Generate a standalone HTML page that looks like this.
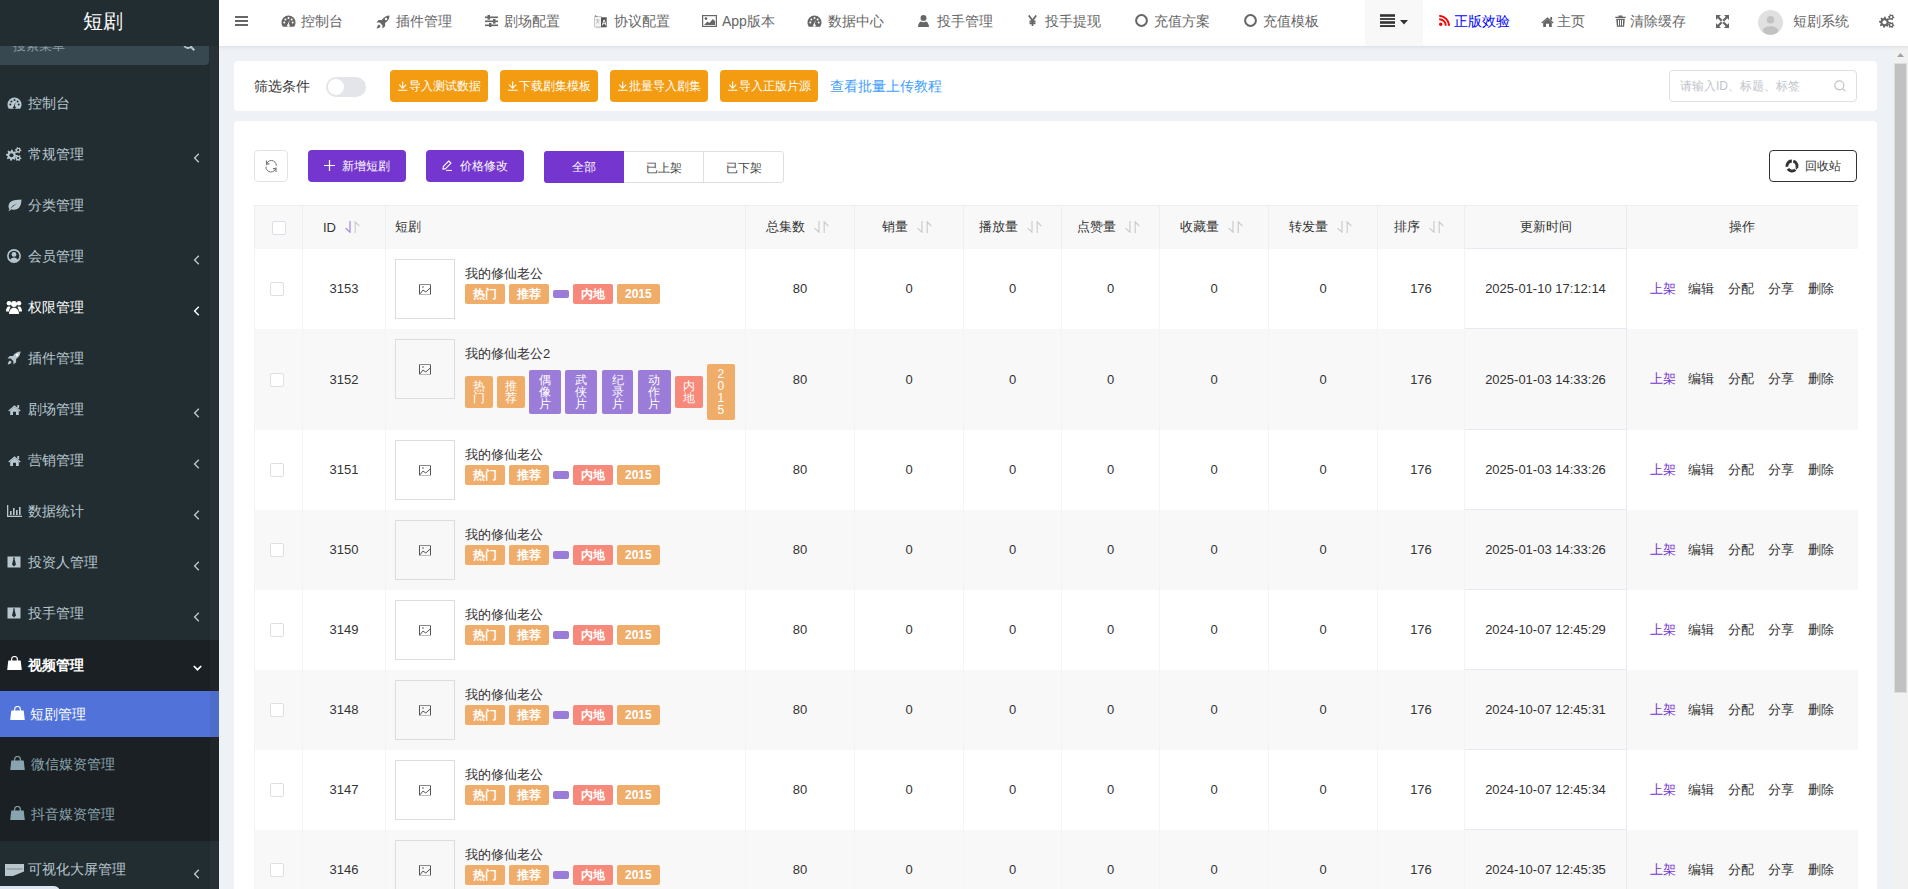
<!DOCTYPE html>
<html><head><meta charset="utf-8">
<style>
*{box-sizing:border-box;margin:0;padding:0}
html,body{width:1908px;height:889px;overflow:hidden;background:#eef2f6;font-family:"Liberation Sans",sans-serif;color:#333}
.sidebar{position:absolute;left:0;top:0;width:219px;height:889px;background:#222d32;overflow:hidden}
.logo{position:absolute;left:0;top:0;width:219px;height:46px;background:#222d32;color:#fff;font-size:20px;line-height:42px;text-align:center;z-index:3;font-weight:300;padding-right:13px}
.ssearch{position:absolute;left:0;top:27px;width:209px;height:38px;background:#374850;border-radius:0 0 4px 0;color:#8a9aa2;font-size:14px}
.ssearch .ph{position:absolute;left:13px;top:11px;font-size:13px;line-height:16px}
.sitem{position:absolute;left:0;width:219px;height:51px;font-size:14px}
.sic{position:absolute;left:6px;top:18px;width:16px;height:14px;display:flex;align-items:center;justify-content:center}
.stx{position:absolute;left:28px;top:15px;line-height:20px}
.sarr{position:absolute;left:193px;top:24px;line-height:0}
.strack{position:absolute;left:210px;top:46px;width:9px;height:843px;background:rgba(255,255,255,0.025)}
.header{position:absolute;left:219px;top:0;width:1689px;height:46px;background:#fff;box-shadow:0 1px 4px rgba(0,0,0,0.09);z-index:2;color:#666}
.nicon{position:absolute;top:15px;line-height:0;color:#666}
.ntext{position:absolute;top:11px;font-size:14px;line-height:20px;color:#666;white-space:nowrap}
.hx{position:absolute}
.vscroll{position:absolute;left:1892px;top:46px;width:16px;height:843px;background:#f1f1f1}
.vscroll .thumb{position:absolute;left:2px;top:17px;width:13px;height:630px;background:#c1c1c1}
.panel{position:absolute;left:234px;width:1643px;background:#fff;border-radius:4px}
.fbtn{position:absolute;top:70px;height:32px;width:98px;background:#f39c12;color:#fff;font-size:12px;border-radius:4px;line-height:32px;text-align:center;white-space:nowrap}
.tbtn{position:absolute;top:150px;height:32px;border-radius:4px;font-size:12px;line-height:32px;white-space:nowrap}
.purple{background:#7536d0;color:#fff}
table{position:absolute;left:254px;top:205px;width:1603px;border-collapse:collapse;table-layout:fixed;font-size:13px;color:#333}
th{height:43px;background:#f8f8f9;font-weight:normal;color:#333;border:1px solid #eceef3;border-width:1px 1px 0 1px;white-space:nowrap}
th:first-child{}
td{border:1px solid #f4f4f4;border-width:0 1px;text-align:center;vertical-align:middle;padding:0}
tr.even td{background:#f8f8f8}
tr.odd td{background:#fff}
.cb{display:inline-block;width:14px;height:14px;border:1px solid #dcdfe6;border-radius:2px;background:#fff;vertical-align:middle}
.sorti{vertical-align:middle;margin-left:9px;position:relative;top:-1px}
td.drama{text-align:left;vertical-align:top}
.dwrap{display:flex;padding:10px 0 0 9px}
.thumb{width:60px;height:60px;border:1px solid #ddd;display:flex;align-items:center;justify-content:center;flex:none}
.dinfo{margin-left:10px}
.dtitle{font-size:13px;line-height:18px;margin-top:6px;color:#333}
.tags{display:flex;align-items:center;margin-top:1px}
.lb{display:inline-block;font-size:12px;line-height:12px;font-weight:600;padding:4px 8px;color:#fff;border-radius:2px;margin-right:4px;text-align:center;word-break:break-all}
.lb.o{background:#f0ad6a}
.lb.r{background:#f7897a}
.lb.p{background:#9b7cd8}
.lb.e{padding:4px 8px;height:8px}
.tags.big{margin-top:1px}
.tags.big .lb{padding:4px 8px;font-weight:normal}
.tags.big .lb.p{margin-right:4.7px}
.ops a{color:#333}
td.dt{border-color:#ebe8f3;border-bottom:1px solid #ebe8f3}
th.dt{border-bottom:1px solid #ebe8f3;border-left-color:#ebe8f3;border-right-color:#ebe8f3}
td:last-child,th:last-child{border-right-color:transparent}
.ops a.on{color:#7536d0}
</style></head><body>
<div class="sidebar">
  <div class="logo">短剧</div>
  <div class="ssearch"><span class="ph">搜索菜单</span><span style="position:absolute;left:183px;top:12px;line-height:0"><svg width="12" height="12" viewBox="0 0 12 12" style=""><circle cx="5" cy="5" r="4" stroke="#b8c7ce" stroke-width="1.8" fill="none"/><path d="M8 8l3.3 3.3" stroke="#b8c7ce" stroke-width="2"/></svg></span></div>
<div class="sitem" style="top:78px;color:#b8c7ce"><span class="sic"><svg width="15" height="12" viewBox="0 0 15 12" style=""><path d="M7.5 0.5A7 7 0 0 0 0.5 7.5c0 1.6.5 3 1.4 4.2h11.2c.9-1.2 1.4-2.6 1.4-4.2A7 7 0 0 0 7.5.5z" fill="currentColor"/><circle cx="3.3" cy="7.6" r="1" fill="#222d32"/><circle cx="4.4" cy="4.4" r="1" fill="#222d32"/><circle cx="7.5" cy="3" r="1" fill="#222d32"/><circle cx="10.6" cy="4.4" r="1" fill="#222d32"/><circle cx="11.7" cy="7.6" r="1" fill="#222d32"/><path d="M8.6 4.5L7.9 9.3a1.3 1.3 0 1 1-1 0z" fill="#222d32"/></svg></span><span class="stx" style="">控制台</span></div>
<div class="sitem" style="top:129px;color:#b8c7ce"><span class="sic"><svg width="16" height="14" viewBox="0 0 16 14" style=""><polygon points="11.10,8.20 10.99,9.29 9.23,9.74 8.85,10.44 9.46,12.16 8.61,12.86 7.04,11.93 6.29,12.15 5.50,13.80 4.41,13.69 3.96,11.93 3.26,11.55 1.54,12.16 0.84,11.31 1.77,9.74 1.55,8.99 -0.10,8.20 0.01,7.11 1.77,6.66 2.15,5.96 1.54,4.24 2.39,3.54 3.96,4.47 4.71,4.25 5.50,2.60 6.59,2.71 7.04,4.47 7.74,4.85 9.46,4.24 10.16,5.09 9.23,6.66 9.45,7.41" fill="currentColor"/><circle cx="5.5" cy="8.2" r="2" fill="#222d32"/><polygon points="15.40,3.20 15.29,4.03 14.20,4.35 13.83,4.83 13.80,5.97 13.03,6.29 12.20,5.50 11.60,5.43 10.60,5.97 9.94,5.46 10.20,4.35 9.97,3.80 9.00,3.20 9.11,2.37 10.20,2.05 10.57,1.57 10.60,0.43 11.37,0.11 12.20,0.90 12.80,0.97 13.80,0.43 14.46,0.94 14.20,2.05 14.43,2.60" fill="currentColor"/><circle cx="12.2" cy="3.2" r="1.1" fill="#222d32"/><polygon points="15.40,11.00 15.29,11.83 14.20,12.15 13.83,12.63 13.80,13.77 13.03,14.09 12.20,13.30 11.60,13.23 10.60,13.77 9.94,13.26 10.20,12.15 9.97,11.60 9.00,11.00 9.11,10.17 10.20,9.85 10.57,9.37 10.60,8.23 11.37,7.91 12.20,8.70 12.80,8.77 13.80,8.23 14.46,8.74 14.20,9.85 14.43,10.40" fill="currentColor"/><circle cx="12.2" cy="11" r="1.1" fill="#222d32"/></svg></span><span class="stx" style="">常规管理</span><span class="sarr"><svg width="7" height="10" viewBox="0 0 7 10" style=""><path d="M5.8 0.8L1.6 5 5.8 9.2" stroke="currentColor" stroke-width="1.4" fill="none"/></svg></span></div>
<div class="sitem" style="top:180px;color:#b8c7ce"><span class="sic"><svg width="15" height="12" viewBox="0 0 15 12" style=""><path d="M14.5 0.5C10 1 4 0.5 2 5c-1 2.3-.3 4.3.6 5.4C5 6.5 8 5 10 4.4 7.5 6 4.5 8.2 1.5 11.5l.8.6c.8-.8 1.5-1.5 2-1.9 2.4 1.2 6.5.9 8.6-2.6 1.6-2.7 1.3-5.5 1.6-7.1z" fill="currentColor"/></svg></span><span class="stx" style="">分类管理</span></div>
<div class="sitem" style="top:231px;color:#b8c7ce"><span class="sic"><svg width="14" height="14" viewBox="0 0 14 14" style=""><circle cx="7" cy="7" r="6.1" fill="none" stroke="currentColor" stroke-width="1.6"/><circle cx="7" cy="5.4" r="2.4" fill="currentColor"/><path d="M3 11c.8-1.7 2.2-2.6 4-2.6s3.2.9 4 2.6A5.6 5.6 0 0 1 7 12.6 5.6 5.6 0 0 1 3 11z" fill="currentColor"/></svg></span><span class="stx" style="">会员管理</span><span class="sarr"><svg width="7" height="10" viewBox="0 0 7 10" style=""><path d="M5.8 0.8L1.6 5 5.8 9.2" stroke="currentColor" stroke-width="1.4" fill="none"/></svg></span></div>
<div class="sitem" style="top:282px;color:#fff"><span class="sic"><svg width="16" height="14" viewBox="0 0 16 14" style=""><circle cx="8" cy="4" r="3" fill="currentColor"/><path d="M3 14c0-3.8 2-6.3 5-6.3s5 2.5 5 6.3z" fill="currentColor"/><circle cx="3" cy="3.2" r="2.3" fill="currentColor"/><path d="M0 11.5c0-3 1.1-5 3-5 .6 0 1.2.1 1.7.4C3.7 8.2 3 10 3 11.5z" fill="currentColor"/><circle cx="13" cy="3.2" r="2.3" fill="currentColor"/><path d="M16 11.5c0-3-1.1-5-3-5-.6 0-1.2.1-1.7.4 1 1.3 1.7 3.1 1.7 4.6z" fill="currentColor"/></svg></span><span class="stx" style="">权限管理</span><span class="sarr"><svg width="7" height="10" viewBox="0 0 7 10" style=""><path d="M5.8 0.8L1.6 5 5.8 9.2" stroke="currentColor" stroke-width="1.4" fill="none"/></svg></span></div>
<div class="sitem" style="top:333px;color:#b8c7ce"><span class="sic"><svg width="14" height="14" viewBox="0 0 14 14" style=""><path d="M13.5 0.5c-3 0-5.6 1.6-7.6 4.4H2.7L0.5 7.6h3.2l2.7 2.7v3.2l2.7-2.2V8.1c2.8-2 4.4-4.6 4.4-7.6z" fill="currentColor"/><path d="M3 9.5c-1.2.6-2 2.2-2.3 4 1.8-.3 3.4-1.1 4-2.3z" fill="currentColor"/><circle cx="10" cy="4" r="1.2" fill="#fff"/></svg></span><span class="stx" style="">插件管理</span></div>
<div class="sitem" style="top:384px;color:#b8c7ce"><span class="sic"><svg width="13" height="11" viewBox="0 0 13 11" style=""><path d="M6.5 1.2L0.3 6.4l.9 1 5.3-4.4 5.3 4.4.9-1z" fill="currentColor"/><path d="M2.2 6.5L6.5 3l4.3 3.5V11H8V7.8H5V11H2.2z" fill="currentColor"/><rect x="9.3" y="1" width="1.8" height="3" fill="currentColor"/></svg></span><span class="stx" style="">剧场管理</span><span class="sarr"><svg width="7" height="10" viewBox="0 0 7 10" style=""><path d="M5.8 0.8L1.6 5 5.8 9.2" stroke="currentColor" stroke-width="1.4" fill="none"/></svg></span></div>
<div class="sitem" style="top:435px;color:#b8c7ce"><span class="sic"><svg width="13" height="11" viewBox="0 0 13 11" style=""><path d="M6.5 1.2L0.3 6.4l.9 1 5.3-4.4 5.3 4.4.9-1z" fill="currentColor"/><path d="M2.2 6.5L6.5 3l4.3 3.5V11H8V7.8H5V11H2.2z" fill="currentColor"/><rect x="9.3" y="1" width="1.8" height="3" fill="currentColor"/></svg></span><span class="stx" style="">营销管理</span><span class="sarr"><svg width="7" height="10" viewBox="0 0 7 10" style=""><path d="M5.8 0.8L1.6 5 5.8 9.2" stroke="currentColor" stroke-width="1.4" fill="none"/></svg></span></div>
<div class="sitem" style="top:486px;color:#b8c7ce"><span class="sic"><svg width="15" height="12" viewBox="0 0 15 12" style=""><rect x="0" y="0" width="1.3" height="12" fill="currentColor"/><rect x="0" y="10.7" width="15" height="1.3" fill="currentColor"/><rect x="3" y="6" width="1.6" height="4" fill="currentColor"/><rect x="6" y="3" width="1.6" height="7" fill="currentColor"/><rect x="9" y="5" width="1.6" height="5" fill="currentColor"/><rect x="12" y="2" width="1.6" height="8" fill="currentColor"/></svg></span><span class="stx" style="">数据统计</span><span class="sarr"><svg width="7" height="10" viewBox="0 0 7 10" style=""><path d="M5.8 0.8L1.6 5 5.8 9.2" stroke="currentColor" stroke-width="1.4" fill="none"/></svg></span></div>
<div class="sitem" style="top:537px;color:#b8c7ce"><span class="sic"><svg width="14" height="12" viewBox="0 0 14 12" style=""><rect x="0.5" y="0.5" width="13" height="11" fill="currentColor"/><path d="M6 1.5h2l-.4 1.6L9 8.5 7 10.5 5 8.5l1.4-5.4z" fill="#222d32"/></svg></span><span class="stx" style="">投资人管理</span><span class="sarr"><svg width="7" height="10" viewBox="0 0 7 10" style=""><path d="M5.8 0.8L1.6 5 5.8 9.2" stroke="currentColor" stroke-width="1.4" fill="none"/></svg></span></div>
<div class="sitem" style="top:588px;color:#b8c7ce"><span class="sic"><svg width="14" height="12" viewBox="0 0 14 12" style=""><rect x="0.5" y="0.5" width="13" height="11" fill="currentColor"/><path d="M6 1.5h2l-.4 1.6L9 8.5 7 10.5 5 8.5l1.4-5.4z" fill="#222d32"/></svg></span><span class="stx" style="">投手管理</span><span class="sarr"><svg width="7" height="10" viewBox="0 0 7 10" style=""><path d="M5.8 0.8L1.6 5 5.8 9.2" stroke="currentColor" stroke-width="1.4" fill="none"/></svg></span></div>
  <div style="position:absolute;left:0;top:640px;width:219px;height:201px;background:#1a2023"></div>
  <div class="sitem" style="top:640px;color:#fff"><span class="sic" style="top:16px"><svg width="15" height="14" viewBox="0 0 15 14" style=""><path d="M4.6 5V3.4a2.9 2.9 0 0 1 5.8 0V5" stroke="currentColor" stroke-width="1.2" fill="none"/><path d="M1.3 4.6h12.4l1.1 9.4H0.2z" fill="currentColor"/></svg></span><span class="stx" style="font-weight:600">视频管理</span><span class="sarr" style="left:193px;top:24.5px"><svg width="9" height="6" viewBox="0 0 9 6" style=""><path d="M0.8 1L4.5 4.7 8.2 1" stroke="currentColor" stroke-width="1.7" fill="none"/></svg></span></div>
  <div style="position:absolute;left:0;top:691px;width:219px;height:46px;background:#5072d9"></div><div style="position:absolute;left:210px;top:691px;width:9px;height:46px;background:rgba(0,0,0,0.07)"></div>
  <div class="sitem" style="top:691px;height:46px;color:#fff"><span class="sic" style="left:9px;top:15px"><svg width="15" height="14" viewBox="0 0 15 14" style=""><path d="M4.6 5V3.4a2.9 2.9 0 0 1 5.8 0V5" stroke="currentColor" stroke-width="1.2" fill="none"/><path d="M1.3 4.6h12.4l1.1 9.4H0.2z" fill="currentColor"/></svg></span><span class="stx" style="left:30px;top:13px">短剧管理</span></div>
  <div class="sitem" style="top:739px;height:50px;color:#8aa4af"><span class="sic" style="left:9px;top:17px"><svg width="15" height="14" viewBox="0 0 15 14" style=""><path d="M4.6 5V3.4a2.9 2.9 0 0 1 5.8 0V5" stroke="currentColor" stroke-width="1.2" fill="none"/><path d="M1.3 4.6h12.4l1.1 9.4H0.2z" fill="currentColor"/></svg></span><span class="stx" style="left:31px;top:15px">微信媒资管理</span></div>
  <div class="sitem" style="top:789px;height:50px;color:#8aa4af"><span class="sic" style="left:9px;top:17px"><svg width="15" height="14" viewBox="0 0 15 14" style=""><path d="M4.6 5V3.4a2.9 2.9 0 0 1 5.8 0V5" stroke="currentColor" stroke-width="1.2" fill="none"/><path d="M1.3 4.6h12.4l1.1 9.4H0.2z" fill="currentColor"/></svg></span><span class="stx" style="left:31px;top:15px">抖音媒资管理</span></div>
  <div class="sitem" style="top:843px;color:#b8c7ce"><span class="sic" style="left:4px;width:20px;top:20px"><svg width="19" height="12" viewBox="0 0 19 12" style=""><rect x="0" y="0" width="19" height="12" fill="currentColor"/><rect x="1.5" y="4.5" width="16" height="1" fill="#888"/><path d="M8 12L19 7.5V12z" fill="#222d32"/></svg></span><span class="stx" style="top:16px">可视化大屏管理</span><span class="sarr" style="top:26px"><svg width="7" height="10" viewBox="0 0 7 10" style=""><path d="M5.8 0.8L1.6 5 5.8 9.2" stroke="currentColor" stroke-width="1.4" fill="none"/></svg></span></div>
  <div class="strack"></div>
  <div style="position:absolute;left:0;top:886px;width:60px;height:10px;background:#dde6f0;border-radius:0 6px 0 0"></div>
</div>
<div class="header">
  <span class="nicon" style="left:16px;top:16px"><svg width="13" height="10" viewBox="0 0 13 10" style=""><rect x="0" y="0" width="13" height="2" fill="currentColor"/><rect x="0" y="4" width="13" height="2" fill="currentColor"/><rect x="0" y="8" width="13" height="2" fill="currentColor"/></svg></span>
<span class="nicon" style="left:62px;"><svg width="15" height="12" viewBox="0 0 15 12" style=""><path d="M7.5 0.5A7 7 0 0 0 0.5 7.5c0 1.6.5 3 1.4 4.2h11.2c.9-1.2 1.4-2.6 1.4-4.2A7 7 0 0 0 7.5.5z" fill="currentColor"/><circle cx="3.3" cy="7.6" r="1" fill="#fff"/><circle cx="4.4" cy="4.4" r="1" fill="#fff"/><circle cx="7.5" cy="3" r="1" fill="#fff"/><circle cx="10.6" cy="4.4" r="1" fill="#fff"/><circle cx="11.7" cy="7.6" r="1" fill="#fff"/><path d="M8.6 4.5L7.9 9.3a1.3 1.3 0 1 1-1 0z" fill="#fff"/></svg></span>
<span class="ntext" style="left:82px">控制台</span>
<span class="nicon" style="left:157px;"><svg width="14" height="14" viewBox="0 0 14 14" style=""><path d="M13.5 0.5c-3 0-5.6 1.6-7.6 4.4H2.7L0.5 7.6h3.2l2.7 2.7v3.2l2.7-2.2V8.1c2.8-2 4.4-4.6 4.4-7.6z" fill="currentColor"/><path d="M3 9.5c-1.2.6-2 2.2-2.3 4 1.8-.3 3.4-1.1 4-2.3z" fill="currentColor"/><circle cx="10" cy="4" r="1.2" fill="#fff"/></svg></span>
<span class="ntext" style="left:177px">插件管理</span>
<span class="nicon" style="left:266px;"><svg width="13" height="12" viewBox="0 0 13 12" style=""><rect x="0" y="1.5" width="13" height="1.6" fill="currentColor"/><rect x="0" y="5.5" width="13" height="1.6" fill="currentColor"/><rect x="0" y="9.5" width="13" height="1.6" fill="currentColor"/><rect x="2.5" y="0" width="2.5" height="4.6" fill="currentColor"/><rect x="8" y="4" width="2.5" height="4.6" fill="currentColor"/><rect x="4" y="8" width="2.5" height="4.6" fill="currentColor"/></svg></span>
<span class="ntext" style="left:285px">剧场配置</span>
<span class="nicon" style="left:375px;"><svg width="13" height="14" viewBox="0 0 13 14" style=""><path d="M0.5 1.5h7v10.5h-7z" fill="#f4f4f4" stroke="#bbb" stroke-width="0.8"/><path d="M1 0.3L4 1.5H1z" fill="#555"/><path d="M2 5h3.5M3.7 4v1M2.4 8.5l2.6-3.2M2.6 5.5l2.4 3" stroke="#aaa" stroke-width="0.7" fill="none"/><path d="M7 2.3h5.7v10H7z" fill="#555"/><path d="M8.3 10.5l1.6-5.5h.5l1.6 5.5M8.9 8.7h2.5" stroke="#fff" stroke-width="0.9" fill="none"/><path d="M2 12.6h4.5" stroke="#bbb" stroke-width="0.8"/></svg></span>
<span class="ntext" style="left:395px">协议配置</span>
<span class="nicon" style="left:483px;"><svg width="15" height="12" viewBox="0 0 15 12" style=""><rect x="0.6" y="0.6" width="13.8" height="10.8" fill="none" stroke="currentColor" stroke-width="1.2"/><circle cx="4" cy="3.6" r="1.4" fill="currentColor"/><path d="M2 10l3.5-3.5 1.8 1.6 3.6-4.2 2.2 2.4V10z" fill="currentColor"/></svg></span>
<span class="ntext" style="left:503px">App版本</span>
<span class="nicon" style="left:588px;"><svg width="15" height="12" viewBox="0 0 15 12" style=""><path d="M7.5 0.5A7 7 0 0 0 0.5 7.5c0 1.6.5 3 1.4 4.2h11.2c.9-1.2 1.4-2.6 1.4-4.2A7 7 0 0 0 7.5.5z" fill="currentColor"/><circle cx="3.3" cy="7.6" r="1" fill="#fff"/><circle cx="4.4" cy="4.4" r="1" fill="#fff"/><circle cx="7.5" cy="3" r="1" fill="#fff"/><circle cx="10.6" cy="4.4" r="1" fill="#fff"/><circle cx="11.7" cy="7.6" r="1" fill="#fff"/><path d="M8.6 4.5L7.9 9.3a1.3 1.3 0 1 1-1 0z" fill="#fff"/></svg></span>
<span class="ntext" style="left:609px">数据中心</span>
<span class="nicon" style="left:699px;"><svg width="11" height="12" viewBox="0 0 11 12" style=""><circle cx="5.5" cy="3" r="3" fill="currentColor"/><path d="M0 12c0-3.2 1.6-5.2 3-5.6.7.5 1.6.8 2.5.8s1.8-.3 2.5-.8c1.4.4 3 2.4 3 5.6z" fill="currentColor"/></svg></span>
<span class="ntext" style="left:718px">投手管理</span>
<span class="nicon" style="left:809px;top:15px"><svg width="9" height="11" viewBox="0 0 9 11" style=""><path d="M0.8 0.4L4.5 5.6 8.2 0.4M4.5 5.4V11M1.5 6.3h6M1.5 8.4h6" stroke="#666" stroke-width="1.7" fill="none"/></svg></span>
<span class="ntext" style="left:826px">投手提现</span>
<span class="nicon" style="left:916px;top:14px"><svg width="13" height="13" viewBox="0 0 13 13" style=""><circle cx="6.5" cy="6.5" r="5.4" fill="none" stroke="currentColor" stroke-width="2"/></svg></span>
<span class="ntext" style="left:935px">充值方案</span>
<span class="nicon" style="left:1025px;top:14px"><svg width="13" height="13" viewBox="0 0 13 13" style=""><circle cx="6.5" cy="6.5" r="5.4" fill="none" stroke="currentColor" stroke-width="2"/></svg></span>
<span class="ntext" style="left:1044px">充值模板</span>
  <div style="position:absolute;left:1146px;top:0;width:58px;height:46px;background:#f8f8f8"></div>
  <span class="nicon" style="left:1161px;top:14px;color:#333"><svg width="15" height="13" viewBox="0 0 15 13" style=""><rect x="0" y="0.2" width="15" height="2.6" fill="currentColor"/><rect x="0" y="4.1" width="15" height="1.8" fill="currentColor"/><rect x="0" y="7.2" width="15" height="2.6" fill="currentColor"/><rect x="0" y="11.1" width="15" height="1.9" fill="currentColor"/></svg></span>
  <span class="nicon" style="left:1181px;top:20px;color:#333"><svg width="8" height="5" viewBox="0 0 8 5" style=""><path d="M0 0h8L4 4.6z" fill="currentColor"/></svg></span>
  <span class="nicon" style="left:1220px;top:15px;color:#f00"><svg width="11" height="11" viewBox="0 0 11 11" style=""><circle cx="1.7" cy="9.3" r="1.7" fill="currentColor"/><path d="M0.2 4.2a6.6 6.6 0 0 1 6.6 6.6" stroke="currentColor" stroke-width="1.9" fill="none"/><path d="M0.2 0.9a9.9 9.9 0 0 1 9.9 9.9" stroke="currentColor" stroke-width="1.9" fill="none"/></svg></span>
  <span class="ntext" style="left:1235px;color:#00f">正版效验</span>
  <span class="nicon" style="left:1322px;top:16px"><svg width="13" height="11" viewBox="0 0 13 11" style=""><path d="M6.5 1.2L0.3 6.4l.9 1 5.3-4.4 5.3 4.4.9-1z" fill="currentColor"/><path d="M2.2 6.5L6.5 3l4.3 3.5V11H8V7.8H5V11H2.2z" fill="currentColor"/><rect x="9.3" y="1" width="1.8" height="3" fill="currentColor"/></svg></span>
  <span class="ntext" style="left:1338px">主页</span>
  <span class="nicon" style="left:1396px;top:15px"><svg width="11" height="12" viewBox="0 0 11 12" style=""><path d="M3.5 0.5h4v1.2h3.2v1.4H0.3V1.7h3.2z" fill="currentColor"/><path d="M1.2 3.8h8.6l-.7 8H1.9z" fill="currentColor"/><rect x="3" y="5" width="1" height="5.5" fill="#fff"/><rect x="5" y="5" width="1" height="5.5" fill="#fff"/><rect x="7" y="5" width="1" height="5.5" fill="#fff"/></svg></span>
  <span class="ntext" style="left:1411px">清除缓存</span>
  <span class="nicon" style="left:1497px;top:15px"><svg width="13" height="13" viewBox="0 0 13 13" style=""><path d="M0 0h5L3.3 1.7 6.5 4.9 4.9 6.5 1.7 3.3 0 5z M13 0v5l-1.7-1.7-3.2 3.2-1.6-1.6 3.2-3.2L8 0z M0 13V8l1.7 1.7 3.2-3.2 1.6 1.6-3.2 3.2L5 13z M13 13H8l1.7-1.7-3.2-3.2 1.6-1.6 3.2 3.2L13 8z" fill="currentColor"/></svg></span>
  <span class="nicon" style="left:1539px;top:10px"><svg width="25" height="25" viewBox="0 0 25 25" style=""><circle cx="12.5" cy="12.5" r="12.5" fill="#e0e0e0"/><circle cx="12.5" cy="9.8" r="3.8" fill="#c2c2c2"/><ellipse cx="12.5" cy="20.5" rx="7.8" ry="4.3" fill="#c2c2c2"/></svg></span>
  <span class="ntext" style="left:1574px">短剧系统</span>
  <span class="nicon" style="left:1660px;top:14px"><svg width="16" height="14" viewBox="0 0 16 14" style=""><polygon points="11.10,8.20 10.99,9.29 9.23,9.74 8.85,10.44 9.46,12.16 8.61,12.86 7.04,11.93 6.29,12.15 5.50,13.80 4.41,13.69 3.96,11.93 3.26,11.55 1.54,12.16 0.84,11.31 1.77,9.74 1.55,8.99 -0.10,8.20 0.01,7.11 1.77,6.66 2.15,5.96 1.54,4.24 2.39,3.54 3.96,4.47 4.71,4.25 5.50,2.60 6.59,2.71 7.04,4.47 7.74,4.85 9.46,4.24 10.16,5.09 9.23,6.66 9.45,7.41" fill="currentColor"/><circle cx="5.5" cy="8.2" r="2" fill="#fff"/><polygon points="15.40,3.20 15.29,4.03 14.20,4.35 13.83,4.83 13.80,5.97 13.03,6.29 12.20,5.50 11.60,5.43 10.60,5.97 9.94,5.46 10.20,4.35 9.97,3.80 9.00,3.20 9.11,2.37 10.20,2.05 10.57,1.57 10.60,0.43 11.37,0.11 12.20,0.90 12.80,0.97 13.80,0.43 14.46,0.94 14.20,2.05 14.43,2.60" fill="currentColor"/><circle cx="12.2" cy="3.2" r="1.1" fill="#fff"/><polygon points="15.40,11.00 15.29,11.83 14.20,12.15 13.83,12.63 13.80,13.77 13.03,14.09 12.20,13.30 11.60,13.23 10.60,13.77 9.94,13.26 10.20,12.15 9.97,11.60 9.00,11.00 9.11,10.17 10.20,9.85 10.57,9.37 10.60,8.23 11.37,7.91 12.20,8.70 12.80,8.77 13.80,8.23 14.46,8.74 14.20,9.85 14.43,10.40" fill="currentColor"/><circle cx="12.2" cy="11" r="1.1" fill="#fff"/></svg></span>
</div>
<div class="vscroll"><svg style="position:absolute;left:5px;top:7px" width="7" height="4" viewBox="0 0 7 4"><path d="M3.5 0L7 4H0z" fill="#a3a3a3"/></svg><div class="thumb"></div></div>
<div class="panel" style="top:61px;height:50px"></div>
<div class="panel" style="top:121px;height:800px"></div>
<div style="position:absolute;left:254px;top:79px;font-size:14px;line-height:14px;color:#333">筛选条件</div>
<div style="position:absolute;left:326px;top:77px;width:40px;height:20px;border-radius:10px;background:#e4e5ea"><div style="position:absolute;left:2px;top:2px;width:16px;height:16px;border-radius:8px;background:#fff"></div></div>
<div class="fbtn" style="left:390px"><svg width="10" height="10" viewBox="0 0 10 10" style="vertical-align:-1px;margin-right:1px"><path d="M4.7 0.5v6.8M1.2 3.7l3.5 3.6 3.5-3.6M0 9.3h9.6" stroke="#fff" stroke-width="1.1" fill="none"/></svg>导入测试数据</div>
<div class="fbtn" style="left:500px"><svg width="10" height="10" viewBox="0 0 10 10" style="vertical-align:-1px;margin-right:1px"><path d="M4.7 0.5v6.8M1.2 3.7l3.5 3.6 3.5-3.6M0 9.3h9.6" stroke="#fff" stroke-width="1.1" fill="none"/></svg>下载剧集模板</div>
<div class="fbtn" style="left:610px"><svg width="10" height="10" viewBox="0 0 10 10" style="vertical-align:-1px;margin-right:1px"><path d="M4.7 0.5v6.8M1.2 3.7l3.5 3.6 3.5-3.6M0 9.3h9.6" stroke="#fff" stroke-width="1.1" fill="none"/></svg>批量导入剧集</div>
<div class="fbtn" style="left:720px"><svg width="10" height="10" viewBox="0 0 10 10" style="vertical-align:-1px;margin-right:1px"><path d="M4.7 0.5v6.8M1.2 3.7l3.5 3.6 3.5-3.6M0 9.3h9.6" stroke="#fff" stroke-width="1.1" fill="none"/></svg>导入正版片源</div>
<div style="position:absolute;left:830px;top:78px;font-size:14px;line-height:16px;color:#409eff">查看批量上传教程</div>
<div style="position:absolute;left:1669px;top:70px;width:188px;height:32px;border:1px solid #dcdfe6;border-radius:4px;font-size:12px;color:#c0c4cc;line-height:30px;padding-left:10px">请输入ID、标题、标签<span style="position:absolute;left:164px;top:9px;line-height:0"><svg width="12" height="12" viewBox="0 0 12 12" style=""><circle cx="5.3" cy="5.3" r="4.5" stroke="#c0c4cc" stroke-width="1.2" fill="none"/><path d="M8.6 8.6l2.8 2.8" stroke="#c0c4cc" stroke-width="1.2"/></svg></span></div>
<div class="tbtn" style="left:254px;width:34px;border:1px solid #e3e3e3;background:#fff"><span style="position:absolute;left:10px;top:9px;line-height:0"><svg width="13" height="13" viewBox="0 0 13 13" style=""><path d="M1.3 5.2A5 5 0 0 1 11.3 5.8" stroke="#777" stroke-width="1" fill="none"/><path d="M1 6.6A5 5 0 0 0 11 7.4" stroke="#777" stroke-width="1" fill="none"/><path d="M1.5 0.5v3.4h3" stroke="#777" stroke-width="1.1" fill="none"/><path d="M11 12V8.6H8" stroke="#777" stroke-width="1.1" fill="none"/></svg></span></div>
<div class="tbtn purple" style="left:308px;width:98px;padding-left:34px"><span style="position:absolute;left:16px;top:10px;line-height:0"><svg width="11" height="11" viewBox="0 0 11 11" style=""><path d="M5.5 0v11M0 5.5h11" stroke="#fff" stroke-width="1.2"/></svg></span>新增短剧</div>
<div class="tbtn purple" style="left:426px;width:98px;padding-left:34px"><span style="position:absolute;left:16px;top:10px;line-height:0"><svg width="10" height="11" viewBox="0 0 10 11" style=""><path d="M6.8 1l2.2 2.2-5.4 5.4-2.7.6.5-2.8z" stroke="#fff" stroke-width="1.1" fill="none" stroke-linejoin="round"/><path d="M4 10.4h6" stroke="#fff" stroke-width="1"/></svg></span>价格修改</div>
<div style="position:absolute;left:544px;top:151px;width:240px;height:32px;border:1px solid #dcdfe6;border-radius:3px;font-size:12px;line-height:30px;color:#333">
 <div style="position:absolute;left:-1px;top:-1px;width:80px;height:32px;background:#7536d0;color:#fff;text-align:center;line-height:33px;border-radius:3px 0 0 3px">全部</div>
 <div style="position:absolute;left:79px;top:1px;width:80px;height:30px;text-align:center;color:#444">已上架</div>
 <div style="position:absolute;left:158px;top:0;width:1px;height:30px;background:#dcdfe6"></div>
 <div style="position:absolute;left:159px;top:1px;width:80px;height:30px;text-align:center;color:#444">已下架</div>
</div>
<div class="tbtn" style="left:1769px;width:88px;border:1px solid #333;background:#fff;border-radius:4px;padding-left:35px;line-height:30px;color:#333"><span style="position:absolute;left:15px;top:8px;line-height:0"><svg width="14" height="14" viewBox="0 0 14 14" style=""><g transform="rotate(-75 7 7)"><circle cx="7" cy="7" r="5" fill="none" stroke="#333" stroke-width="2.8" stroke-dasharray="8.2 2.27"/></g><path d="M3.2 2.2l2.6-.4-.6 2.4z M12.6 8.4l-1 2.4-1.5-2z M4.2 12.2l-2.2-1.6 2.4-.8z" fill="#333"/></svg></span>回收站</div>
<table><colgroup><col style="width:48px"><col style="width:83px"><col style="width:360px"><col style="width:109px"><col style="width:109px"><col style="width:98px"><col style="width:98px"><col style="width:109px"><col style="width:109px"><col style="width:87px"><col style="width:162px"><col style="width:231px"></colgroup>
<thead><tr><th style="text-align:center"><span class="cb"></span></th><th style="text-align:center"><span style="padding-right:5px">ID<svg class="sorti" width="15" height="12" viewBox="0 0 15 12"><path d="M5 0v11.2L0.6 7.2" stroke="#a07be0" stroke-width="1.1" fill="none"/><path d="M10.2 12V0.9l4.2 4.3" stroke="#c8c8c8" stroke-width="1.1" fill="none"/></svg></span></th><th style="text-align:left;padding-left:9px">短剧</th><th style="text-align:center"><span style="padding-right:5px">总集数<svg class="sorti" width="15" height="12" viewBox="0 0 15 12"><path d="M5 0v11.2L0.6 7.2" stroke="#c8c8c8" stroke-width="1.1" fill="none"/><path d="M10.2 12V0.9l4.2 4.3" stroke="#c8c8c8" stroke-width="1.1" fill="none"/></svg></span></th><th style="text-align:center"><span style="padding-right:5px">销量<svg class="sorti" width="15" height="12" viewBox="0 0 15 12"><path d="M5 0v11.2L0.6 7.2" stroke="#c8c8c8" stroke-width="1.1" fill="none"/><path d="M10.2 12V0.9l4.2 4.3" stroke="#c8c8c8" stroke-width="1.1" fill="none"/></svg></span></th><th style="text-align:center"><span style="padding-right:5px">播放量<svg class="sorti" width="15" height="12" viewBox="0 0 15 12"><path d="M5 0v11.2L0.6 7.2" stroke="#c8c8c8" stroke-width="1.1" fill="none"/><path d="M10.2 12V0.9l4.2 4.3" stroke="#c8c8c8" stroke-width="1.1" fill="none"/></svg></span></th><th style="text-align:center"><span style="padding-right:5px">点赞量<svg class="sorti" width="15" height="12" viewBox="0 0 15 12"><path d="M5 0v11.2L0.6 7.2" stroke="#c8c8c8" stroke-width="1.1" fill="none"/><path d="M10.2 12V0.9l4.2 4.3" stroke="#c8c8c8" stroke-width="1.1" fill="none"/></svg></span></th><th style="text-align:center"><span style="padding-right:5px">收藏量<svg class="sorti" width="15" height="12" viewBox="0 0 15 12"><path d="M5 0v11.2L0.6 7.2" stroke="#c8c8c8" stroke-width="1.1" fill="none"/><path d="M10.2 12V0.9l4.2 4.3" stroke="#c8c8c8" stroke-width="1.1" fill="none"/></svg></span></th><th style="text-align:center"><span style="padding-right:5px">转发量<svg class="sorti" width="15" height="12" viewBox="0 0 15 12"><path d="M5 0v11.2L0.6 7.2" stroke="#c8c8c8" stroke-width="1.1" fill="none"/><path d="M10.2 12V0.9l4.2 4.3" stroke="#c8c8c8" stroke-width="1.1" fill="none"/></svg></span></th><th style="text-align:center"><span style="padding-right:5px">排序<svg class="sorti" width="15" height="12" viewBox="0 0 15 12"><path d="M5 0v11.2L0.6 7.2" stroke="#c8c8c8" stroke-width="1.1" fill="none"/><path d="M10.2 12V0.9l4.2 4.3" stroke="#c8c8c8" stroke-width="1.1" fill="none"/></svg></span></th><th class="dt" style="text-align:center">更新时间</th><th style="text-align:center">操作</th></tr></thead>
<tbody><tr class="odd" style="height:80px"><td><span class="cb" style="position:relative;left:-2px"></span></td><td>3153</td><td class="drama"><div class="dwrap"><div class="thumb"><svg width="12" height="11" viewBox="0 0 12 11" style="position:relative;left:-0.5px;top:0.5px"><path d="M0.5 0.5v10M11.5 0.5v10" stroke="#555" stroke-width="1"/><path d="M0.5 0.5h11" stroke="#8a8a8a" stroke-width="1"/><path d="M0.5 10.5h11" stroke="#bbb" stroke-width="1"/><path d="M1 9.8L4 6 6.8 8 11 4.2" stroke="#555" stroke-width="1" fill="none"/><circle cx="4" cy="3" r="0.8" fill="#555"/></svg></div><div class="dinfo"><div class="dtitle">我的修仙老公</div><div class="tags"><span class="lb o">热门</span><span class="lb o">推荐</span><span class="lb p e"></span><span class="lb r">内地</span><span class="lb o">2015</span></div></div></div></td><td>80</td><td>0</td><td>0</td><td>0</td><td>0</td><td>0</td><td>176</td><td class="dt">2025-01-10 17:12:14</td><td class="ops"><a class="on" style="margin-right:11.4px">上架</a><a>编辑</a><a style="margin-left:14px">分配</a><a style="margin-left:14px">分享</a><a style="margin-left:14px">删除</a></td></tr><tr class="even" style="height:101px"><td><span class="cb" style="position:relative;left:-2px"></span></td><td>3152</td><td class="drama"><div class="dwrap"><div class="thumb"><svg width="12" height="11" viewBox="0 0 12 11" style="position:relative;left:-0.5px;top:0.5px"><path d="M0.5 0.5v10M11.5 0.5v10" stroke="#555" stroke-width="1"/><path d="M0.5 0.5h11" stroke="#8a8a8a" stroke-width="1"/><path d="M0.5 10.5h11" stroke="#bbb" stroke-width="1"/><path d="M1 9.8L4 6 6.8 8 11 4.2" stroke="#555" stroke-width="1" fill="none"/><circle cx="4" cy="3" r="0.8" fill="#555"/></svg></div><div class="dinfo"><div class="dtitle">我的修仙老公2</div><div class="tags big"><span class="lb o" style="width:28px">热门</span><span class="lb o" style="width:28px">推荐</span><span class="lb p" style="width:31.5px;margin-right:4.6px">偶像片</span><span class="lb p" style="width:32.2px;margin-right:4.8px">武侠片</span><span class="lb p" style="width:31.3px;margin-right:4.5px">纪录片</span><span class="lb p" style="width:32.9px;margin-right:4px">动作片</span><span class="lb r" style="width:28px">内地</span><span class="lb o" style="width:28px;padding:4px 0">2<br>0<br>1<br>5</span></div></div></div></td><td>80</td><td>0</td><td>0</td><td>0</td><td>0</td><td>0</td><td>176</td><td class="dt">2025-01-03 14:33:26</td><td class="ops"><a class="on" style="margin-right:11.4px">上架</a><a>编辑</a><a style="margin-left:14px">分配</a><a style="margin-left:14px">分享</a><a style="margin-left:14px">删除</a></td></tr><tr class="odd" style="height:80px"><td><span class="cb" style="position:relative;left:-2px"></span></td><td>3151</td><td class="drama"><div class="dwrap"><div class="thumb"><svg width="12" height="11" viewBox="0 0 12 11" style="position:relative;left:-0.5px;top:0.5px"><path d="M0.5 0.5v10M11.5 0.5v10" stroke="#555" stroke-width="1"/><path d="M0.5 0.5h11" stroke="#8a8a8a" stroke-width="1"/><path d="M0.5 10.5h11" stroke="#bbb" stroke-width="1"/><path d="M1 9.8L4 6 6.8 8 11 4.2" stroke="#555" stroke-width="1" fill="none"/><circle cx="4" cy="3" r="0.8" fill="#555"/></svg></div><div class="dinfo"><div class="dtitle">我的修仙老公</div><div class="tags"><span class="lb o">热门</span><span class="lb o">推荐</span><span class="lb p e"></span><span class="lb r">内地</span><span class="lb o">2015</span></div></div></div></td><td>80</td><td>0</td><td>0</td><td>0</td><td>0</td><td>0</td><td>176</td><td class="dt">2025-01-03 14:33:26</td><td class="ops"><a class="on" style="margin-right:11.4px">上架</a><a>编辑</a><a style="margin-left:14px">分配</a><a style="margin-left:14px">分享</a><a style="margin-left:14px">删除</a></td></tr><tr class="even" style="height:80px"><td><span class="cb" style="position:relative;left:-2px"></span></td><td>3150</td><td class="drama"><div class="dwrap"><div class="thumb"><svg width="12" height="11" viewBox="0 0 12 11" style="position:relative;left:-0.5px;top:0.5px"><path d="M0.5 0.5v10M11.5 0.5v10" stroke="#555" stroke-width="1"/><path d="M0.5 0.5h11" stroke="#8a8a8a" stroke-width="1"/><path d="M0.5 10.5h11" stroke="#bbb" stroke-width="1"/><path d="M1 9.8L4 6 6.8 8 11 4.2" stroke="#555" stroke-width="1" fill="none"/><circle cx="4" cy="3" r="0.8" fill="#555"/></svg></div><div class="dinfo"><div class="dtitle">我的修仙老公</div><div class="tags"><span class="lb o">热门</span><span class="lb o">推荐</span><span class="lb p e"></span><span class="lb r">内地</span><span class="lb o">2015</span></div></div></div></td><td>80</td><td>0</td><td>0</td><td>0</td><td>0</td><td>0</td><td>176</td><td class="dt">2025-01-03 14:33:26</td><td class="ops"><a class="on" style="margin-right:11.4px">上架</a><a>编辑</a><a style="margin-left:14px">分配</a><a style="margin-left:14px">分享</a><a style="margin-left:14px">删除</a></td></tr><tr class="odd" style="height:80px"><td><span class="cb" style="position:relative;left:-2px"></span></td><td>3149</td><td class="drama"><div class="dwrap"><div class="thumb"><svg width="12" height="11" viewBox="0 0 12 11" style="position:relative;left:-0.5px;top:0.5px"><path d="M0.5 0.5v10M11.5 0.5v10" stroke="#555" stroke-width="1"/><path d="M0.5 0.5h11" stroke="#8a8a8a" stroke-width="1"/><path d="M0.5 10.5h11" stroke="#bbb" stroke-width="1"/><path d="M1 9.8L4 6 6.8 8 11 4.2" stroke="#555" stroke-width="1" fill="none"/><circle cx="4" cy="3" r="0.8" fill="#555"/></svg></div><div class="dinfo"><div class="dtitle">我的修仙老公</div><div class="tags"><span class="lb o">热门</span><span class="lb o">推荐</span><span class="lb p e"></span><span class="lb r">内地</span><span class="lb o">2015</span></div></div></div></td><td>80</td><td>0</td><td>0</td><td>0</td><td>0</td><td>0</td><td>176</td><td class="dt">2024-10-07 12:45:29</td><td class="ops"><a class="on" style="margin-right:11.4px">上架</a><a>编辑</a><a style="margin-left:14px">分配</a><a style="margin-left:14px">分享</a><a style="margin-left:14px">删除</a></td></tr><tr class="even" style="height:80px"><td><span class="cb" style="position:relative;left:-2px"></span></td><td>3148</td><td class="drama"><div class="dwrap"><div class="thumb"><svg width="12" height="11" viewBox="0 0 12 11" style="position:relative;left:-0.5px;top:0.5px"><path d="M0.5 0.5v10M11.5 0.5v10" stroke="#555" stroke-width="1"/><path d="M0.5 0.5h11" stroke="#8a8a8a" stroke-width="1"/><path d="M0.5 10.5h11" stroke="#bbb" stroke-width="1"/><path d="M1 9.8L4 6 6.8 8 11 4.2" stroke="#555" stroke-width="1" fill="none"/><circle cx="4" cy="3" r="0.8" fill="#555"/></svg></div><div class="dinfo"><div class="dtitle">我的修仙老公</div><div class="tags"><span class="lb o">热门</span><span class="lb o">推荐</span><span class="lb p e"></span><span class="lb r">内地</span><span class="lb o">2015</span></div></div></div></td><td>80</td><td>0</td><td>0</td><td>0</td><td>0</td><td>0</td><td>176</td><td class="dt">2024-10-07 12:45:31</td><td class="ops"><a class="on" style="margin-right:11.4px">上架</a><a>编辑</a><a style="margin-left:14px">分配</a><a style="margin-left:14px">分享</a><a style="margin-left:14px">删除</a></td></tr><tr class="odd" style="height:80px"><td><span class="cb" style="position:relative;left:-2px"></span></td><td>3147</td><td class="drama"><div class="dwrap"><div class="thumb"><svg width="12" height="11" viewBox="0 0 12 11" style="position:relative;left:-0.5px;top:0.5px"><path d="M0.5 0.5v10M11.5 0.5v10" stroke="#555" stroke-width="1"/><path d="M0.5 0.5h11" stroke="#8a8a8a" stroke-width="1"/><path d="M0.5 10.5h11" stroke="#bbb" stroke-width="1"/><path d="M1 9.8L4 6 6.8 8 11 4.2" stroke="#555" stroke-width="1" fill="none"/><circle cx="4" cy="3" r="0.8" fill="#555"/></svg></div><div class="dinfo"><div class="dtitle">我的修仙老公</div><div class="tags"><span class="lb o">热门</span><span class="lb o">推荐</span><span class="lb p e"></span><span class="lb r">内地</span><span class="lb o">2015</span></div></div></div></td><td>80</td><td>0</td><td>0</td><td>0</td><td>0</td><td>0</td><td>176</td><td class="dt">2024-10-07 12:45:34</td><td class="ops"><a class="on" style="margin-right:11.4px">上架</a><a>编辑</a><a style="margin-left:14px">分配</a><a style="margin-left:14px">分享</a><a style="margin-left:14px">删除</a></td></tr><tr class="even" style="height:80px"><td><span class="cb" style="position:relative;left:-2px"></span></td><td>3146</td><td class="drama"><div class="dwrap"><div class="thumb"><svg width="12" height="11" viewBox="0 0 12 11" style="position:relative;left:-0.5px;top:0.5px"><path d="M0.5 0.5v10M11.5 0.5v10" stroke="#555" stroke-width="1"/><path d="M0.5 0.5h11" stroke="#8a8a8a" stroke-width="1"/><path d="M0.5 10.5h11" stroke="#bbb" stroke-width="1"/><path d="M1 9.8L4 6 6.8 8 11 4.2" stroke="#555" stroke-width="1" fill="none"/><circle cx="4" cy="3" r="0.8" fill="#555"/></svg></div><div class="dinfo"><div class="dtitle">我的修仙老公</div><div class="tags"><span class="lb o">热门</span><span class="lb o">推荐</span><span class="lb p e"></span><span class="lb r">内地</span><span class="lb o">2015</span></div></div></div></td><td>80</td><td>0</td><td>0</td><td>0</td><td>0</td><td>0</td><td>176</td><td class="dt">2024-10-07 12:45:35</td><td class="ops"><a class="on" style="margin-right:11.4px">上架</a><a>编辑</a><a style="margin-left:14px">分配</a><a style="margin-left:14px">分享</a><a style="margin-left:14px">删除</a></td></tr></tbody></table>
</body></html>
